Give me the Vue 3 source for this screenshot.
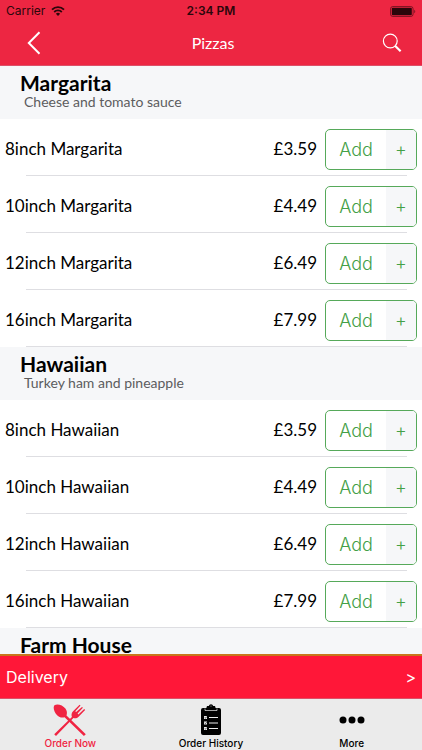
<script setup>
const sizes = [
  { size: '8inch', price: '£3.59' },
  { size: '10inch', price: '£4.49' },
  { size: '12inch', price: '£6.49' },
  { size: '16inch', price: '£7.99' },
]

const pizzas = [
  { name: 'Margarita', description: 'Cheese and tomato sauce', sizes },
  { name: 'Hawaiian', description: 'Turkey ham and pineapple', sizes },
  { name: 'Farm House', description: '', sizes: [] },
]
</script>

<template>
  <div class="screen">
    <header class="top">
      <div class="status">
        <div class="carrier">
          <span>Carrier</span>
          <svg class="wifi" viewBox="0 0 14 10" aria-hidden="true">
            <path d="M1 3.6a8.6 8.6 0 0 1 12 0" fill="none" stroke="currentColor" stroke-width="1.9" />
            <path d="M3.2 6a5.4 5.4 0 0 1 7.6 0" fill="none" stroke="currentColor" stroke-width="1.8" />
            <path d="M7 10 4.9 7.7a3 3 0 0 1 4.2 0z" fill="currentColor" />
          </svg>
        </div>
        <span class="clock">2:34 PM</span>
        <svg class="battery" viewBox="0 0 26 11" aria-hidden="true">
          <rect x=".5" y=".5" width="22.6" height="10" rx="2.4" fill="none" stroke="currentColor" stroke-opacity=".55" />
          <rect x="1.8" y="1.8" width="20" height="7.4" rx="1" fill="currentColor" />
          <path d="M24.2 3.7c1.4.6 1.4 3 0 3.6z" fill="currentColor" fill-opacity=".55" />
        </svg>
      </div>
      <nav class="nav">
        <button class="icon-button" type="button" aria-label="Back">
          <svg class="back" viewBox="0 0 14 24" aria-hidden="true">
            <path d="M12.500 1.200 1.800 12l10.700 10.800" fill="none" stroke="currentColor" stroke-width="2" />
          </svg>
        </button>
        <h1>Pizzas</h1>
        <button class="icon-button" type="button" aria-label="Search">
          <svg class="search" viewBox="0 0 20 20" aria-hidden="true">
            <circle cx="8.300" cy="8" r="6.900" fill="none" stroke="currentColor" stroke-width="1.200" />
            <path d="m13 12.800 5.600 5.400" stroke="currentColor" stroke-width="2.200" />
          </svg>
        </button>
      </nav>
    </header>

    <main class="menu">
      <section v-for="pizza in pizzas" :key="pizza.name">
        <div class="heading">
          <h2>{{ pizza.name }}</h2>
          <p>{{ pizza.description }}</p>
        </div>
        <ul class="items">
          <li v-for="item in pizza.sizes" :key="item.size" class="item">
            <span class="name">{{ item.size }} {{ pizza.name }}</span>
            <span class="price">{{ item.price }}</span>
            <button class="add" type="button">
              <span class="add-label">Add</span>
              <span class="plus">+</span>
            </button>
          </li>
        </ul>
      </section>
    </main>

    <button class="delivery" type="button">
      <span>Delivery</span>
      <span class="arrow">&gt;</span>
    </button>

    <nav class="tabs">
      <a class="tab active" href="#order">
        <svg viewBox="0 0 34 32" aria-hidden="true">
          <path d="M1.400 1.200C4.400-.6 9.800 1 12.400 4.600c1.900 2.700 1.700 5 1.100 6.800L32.800 30.200l-1.900 1.700L11.600 13.200c-2.600.9-5.200.4-7.500-1.900C1 8.200-.2 3.400 1.400 1.200z" fill="currentColor" />
          <path d="M1.200 30.200 18.900 13c-.8-2.500-.3-4.200 1.400-5.900L26.600.7l.9.9-5.200 5.700.8.800 5.900-5.200.9.900-5.300 5.800.8.800 5.800-5.300.9.900-6.500 6.700c-1.700 1.700-3.300 2-5.200 1.300L3 31.900z" fill="currentColor" />
        </svg>
        <span>Order Now</span>
      </a>
      <a class="tab" href="#history">
        <svg viewBox="0 0 34 32" aria-hidden="true">
          <path d="M9 4h3c.5 0 .7-.4.7-1 0-.7.4-1 1-1h1.100a2.300 2.300 0 0 1 4.400 0h1.100c.6 0 1 .3 1 1 0 .6.200 1 .7 1h3a2 2 0 0 1 2 2v23a2 2 0 0 1-2 2H9a2 2 0 0 1-2-2V6a2 2 0 0 1 2-2z" fill="currentColor" />
          <path d="M11 4.500v2h12v-2M17 1.600v1" fill="none" stroke="#ebebeb" stroke-width=".7" />
          <path d="M10 12h3v3h-3zM10 17.500h3v3h-3zM10 23h3v3h-3z" fill="#ebebeb" />
          <path d="m10.700 13.500.8.700 1.200-1.600m-2 6.400.8.700 1.200-1.600m-2 6.400.8.700 1.200-1.600" fill="none" stroke="currentColor" stroke-width=".6" />
          <path d="M15 13.500h9M15 19h9M15 24.500h9" stroke="#ebebeb" stroke-width="1" />
        </svg>
        <span>Order History</span>
      </a>
      <a class="tab" href="#more">
        <svg viewBox="0 0 34 32" aria-hidden="true">
          <circle cx="8" cy="16" r="3.500" fill="currentColor" />
          <circle cx="17" cy="16" r="3.500" fill="currentColor" />
          <circle cx="26" cy="16" r="3.500" fill="currentColor" />
        </svg>
        <span>More</span>
      </a>
    </nav>
  </div>
</template>

<style>
body {
  margin: 0;
}
</style>

<style scoped>
* {
  box-sizing: border-box;
}

.screen {
  display: flex;
  flex-direction: column;
  height: 100vh;
  overflow: hidden;
  background: #fff;
  color: #000;
  font-family: Lato, "Noto Sans", sans-serif;
}

button {
  padding: 0;
  border: 0;
  background: none;
  color: inherit;
  font: inherit;
  cursor: pointer;
}

.top {
  flex: none;
  background: #ed2642;
  border-bottom: 1px solid #dc5068;
}

.status {
  display: grid;
  grid-template-columns: 1fr auto 1fr;
  align-items: center;
  height: 22px;
  padding: 0 6px;
  color: #2b060b;
  font-family: Inter, sans-serif;
  font-size: 12px;
  line-height: 22px;
}

.carrier {
  display: flex;
  align-items: center;
  gap: 6px;
}

.wifi {
  width: 14px;
  height: 10px;
}

.clock {
  font-weight: 600;
}

.battery {
  justify-self: end;
  width: 26px;
  height: 11px;
}

.nav {
  display: grid;
  grid-template-columns: 44px 1fr 44px;
  align-items: center;
  height: 43px;
  padding: 0 8px 2px 12px;
  color: #fff;
}

.nav h1 {
  margin: 0;
  font-size: 16px;
  font-weight: 400;
  line-height: 20px;
  text-align: center;
}

.icon-button {
  display: flex;
  align-items: center;
  justify-content: center;
  height: 41px;
}

.back {
  width: 14px;
  height: 24px;
}

.search {
  width: 20px;
  height: 20px;
}

.menu {
  flex: 1;
  min-height: 0;
  overflow: hidden;
}

.heading {
  height: 53px;
  padding: 5px 20px 0 20px;
  background: #f6f7f9;
}

.heading h2 {
  margin: 0;
  font-size: 21px;
  font-weight: 700;
  line-height: 24px;
}

.heading p {
  margin: 0;
  padding-left: 4px;
  color: #5c5c5e;
  font-size: 14px;
  line-height: 14px;
}

.items {
  margin: 0;
  padding: 0;
  list-style: none;
}

.item {
  display: grid;
  grid-template-columns: 1fr auto 92px;
  column-gap: 8px;
  align-items: center;
  height: 57px;
  padding: 3px 5px 0 5px;
  background: linear-gradient(#dedee2, #dedee2) 26px 100% / calc(100% - 41px) 1px no-repeat;
  font-size: 17px;
  line-height: 22px;
}

.add {
  display: grid;
  grid-template-columns: 1fr 30px;
  height: 41px;
  overflow: hidden;
  border: 1px solid #56a95a;
  border-radius: 5px;
  color: #43a047;
  font-family: Inter, sans-serif;
  font-size: 18px;
  font-weight: 300;
  line-height: 39px;
}

.plus {
  background: #f6f7f9;
}

.delivery {
  flex: none;
  display: flex;
  align-items: center;
  justify-content: space-between;
  height: 45px;
  padding: 0 6px;
  border-top: 2px solid #c8761c;
  border-bottom: 1px solid #dc5068;
  background: #ff1738;
  color: #fff;
  font-family: Inter, sans-serif;
  font-size: 16px;
}

.tabs {
  flex: none;
  display: grid;
  grid-template-columns: repeat(3, 1fr);
  height: 51px;
  background: #ebebeb;
}

.tab {
  display: flex;
  flex-direction: column;
  align-items: center;
  padding-top: 5px;
  color: #000;
  font-family: Inter, sans-serif;
  font-size: 10px;
  font-weight: 500;
  line-height: 14px;
  text-decoration: none;
}

.tab svg {
  width: 34px;
  height: 32px;
}

.active {
  color: #f02442;
}
</style>
